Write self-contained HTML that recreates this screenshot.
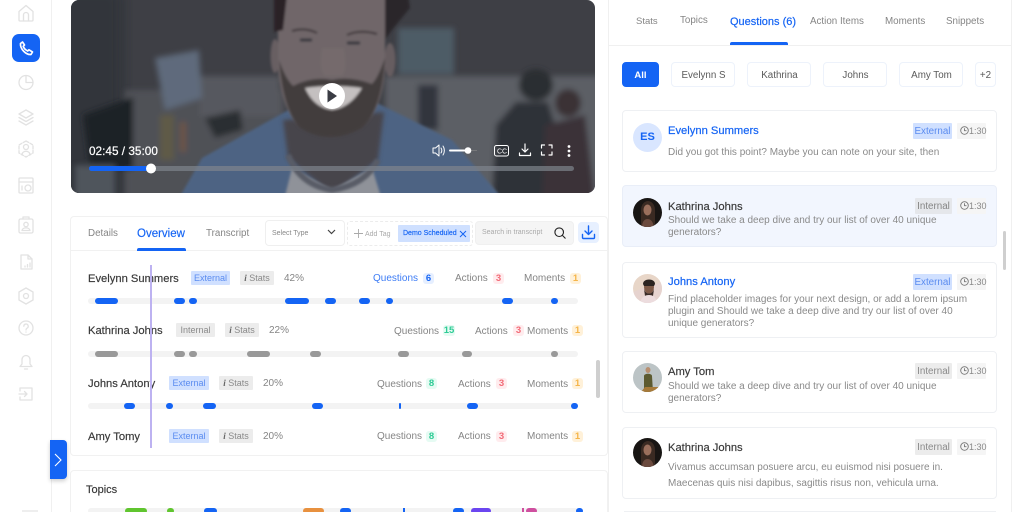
<!DOCTYPE html>
<html><head><meta charset="utf-8">
<style>
html,body{margin:0;padding:0;width:1024px;height:512px;overflow:hidden;background:#fff}
body{position:relative;font-family:"Liberation Sans",sans-serif;color:#888}
div,span.a{position:absolute;box-sizing:border-box}
.t{position:absolute;white-space:nowrap;line-height:14px;font-size:10px;color:#858585;transform:translateY(1px)}
.n{font-size:11.2px;color:#3a3a3a;-webkit-text-stroke:.18px #3a3a3a}
.b{position:absolute;height:14px;line-height:14px;border-radius:1px;font-size:9px;text-align:center;white-space:nowrap}
.ext{background:#d0e0ff;color:#5b8cf0}
.int{background:#ececec;color:#8a8a8a}
.st{background:#ececec;color:#8a8a8a}
.c{position:absolute;height:11px;line-height:11px;width:11px;border-radius:3px;font-size:9.5px;text-align:center;font-weight:bold}
.tr{position:absolute;left:88px;width:490px;height:6px;border-radius:3px;background:#f3f3f3}
.s{position:absolute;height:6px;border-radius:3px;top:0;background:#1464f4}
.g .s{background:#999}
.card{position:absolute;left:622px;width:375px;border:1px solid #eef0f3;border-radius:4px;background:#fff}
.chip{position:absolute;top:62px;height:25px;line-height:24px;padding:1px 0 0 1px;border:1px solid #edf2fb;border-radius:4px;text-align:center;font-size:9.8px;color:#5a5a5a;background:#fff}
.pill{position:absolute;left:957px;width:29px;height:16px;line-height:17px;background:#f5f5f5;border-radius:1px;font-size:9px;color:#888;padding-left:12px;box-sizing:border-box}
.badge{position:absolute;width:39px;height:16px;line-height:17px;font-size:9.8px;text-align:center;border-radius:1px}
.av{position:absolute;left:633px;width:29px;height:29px;border-radius:50%;overflow:hidden}
.body{position:absolute;left:668px;font-size:10px;line-height:12.2px;color:#8a8a8a;white-space:nowrap}
svg{position:absolute;overflow:visible}
.ic{fill:none;stroke:#e2e2e2;stroke-width:1.3;stroke-linejoin:round;stroke-linecap:round}
</style></head><body>

<!-- sidebar -->
<div style="left:51px;top:0;width:1px;height:512px;background:#f0f0f0"></div>
<svg class="ic" style="left:17px;top:4px" width="18" height="18" viewBox="0 0 18 18"><path d="M2 7.500 9 1.500l7 6V16a1 1 0 0 1-1 1H3a1 1 0 0 1-1-1z"/><path d="M6.500 17v-6a2.500 2.500 0 0 1 5 0v6"/></svg>
<div style="left:12px;top:34px;width:28px;height:28px;border-radius:7px;background:#1464f4"></div>
<svg style="left:19px;top:41px" width="15" height="15" viewBox="0 0 15 15" fill="none" stroke="#fff" stroke-width="1.700" stroke-linecap="round" stroke-linejoin="round"><path d="M1.500 2.500 3.500 1l2 3-1.300 1.300c.6 2 2.200 3.600 4.500 4.700L10 8.800l3.500 2.200-1.500 2.500c-5 .5-11-5.500-10.500-11z"/></svg>
<svg class="ic" style="left:18px;top:74px" width="16" height="16" viewBox="0 0 16 16"><circle cx="8" cy="8.500" r="7"/><path d="M8 1.500v7h7"/></svg>
<svg class="ic" style="left:18px;top:109px" width="16" height="17" viewBox="0 0 16 17"><path d="M8 1 15 5 8 9 1 5z"/><path d="M1 8.500 8 12.500l7-4"/><path d="M1 12 8 16l7-4"/></svg>
<svg class="ic" style="left:17px;top:140px" width="18" height="18" viewBox="0 0 18 18"><path d="M9 1l7 4v8l-7 4-7-4V5z" stroke-dasharray="3 1.500"/><circle cx="9" cy="7" r="2.500"/><path d="M5 15c0-5 8-5 8 0"/></svg>
<svg class="ic" style="left:18px;top:177px" width="16" height="17" viewBox="0 0 16 17"><rect x="1" y="1" width="14" height="15" rx="1"/><path d="M1 5h14"/><circle cx="10" cy="11" r="3"/><path d="M4 9v4"/></svg>
<svg class="ic" style="left:18px;top:216px" width="16" height="18" viewBox="0 0 16 18"><rect x="1" y="3" width="14" height="14" rx="1.500"/><path d="M5 3V1h6v2"/><circle cx="8" cy="8.500" r="2.200"/><path d="M4 14.500c.5-3.500 7.500-3.500 8 0z"/></svg>
<svg class="ic" style="left:20px;top:254px" width="13" height="16" viewBox="0 0 13 16"><path d="M1 1h7l4 4v10H1z"/><path d="M8 1v4h4"/><path d="M5 13v-1M7.500 13v-2.500M10 13V9"/></svg>
<svg class="ic" style="left:18px;top:287px" width="16" height="18" viewBox="0 0 16 18"><path d="M8 1l7 4v8l-7 4-7-4V5z"/><circle cx="8" cy="9" r="2.500"/></svg>
<svg class="ic" style="left:18px;top:320px" width="16" height="16" viewBox="0 0 16 16"><circle cx="8" cy="8" r="7"/><path d="M5.800 6.200a2.200 2.200 0 1 1 3.200 2C8.300 8.600 8 9 8 10M8 12v.1"/></svg>
<svg class="ic" style="left:19px;top:354px" width="14" height="16" viewBox="0 0 14 16"><path d="M7 1.500a4 4 0 0 1 4 4V10l2 2.500H1L3 10V5.500a4 4 0 0 1 4-4z"/><path d="M5.500 15h3"/></svg>
<svg class="ic" style="left:19px;top:387px" width="14" height="14" viewBox="0 0 14 14"><path d="M1 4V1h12v12H1v-3"/><path d="M0 7h8M5.500 4.500 8 7l-2.500 2.500"/></svg>
<div style="left:22px;top:510px;width:16px;height:2px;background:#eee"></div>

<!-- video -->
<svg style="left:71px;top:0" width="524" height="193" viewBox="71 0 524 193">
<defs>
<clipPath id="vc"><rect x="71" y="0" width="524" height="193" rx="8"/></clipPath>
<filter id="b8"><feGaussianBlur stdDeviation="8"/></filter>
<filter id="b3"><feGaussianBlur stdDeviation="3"/></filter>
<filter id="b2"><feGaussianBlur stdDeviation="2"/></filter>
<filter id="b1"><feGaussianBlur stdDeviation="1.200"/></filter>
</defs>
<g clip-path="url(#vc)">
<rect x="60" y="-5" width="550" height="205" fill="#3e3f45"/>
<rect x="50" y="-15" width="75" height="225" fill="#33353b" filter="url(#b8)"/>
<g filter="url(#b3)">
<rect x="385" y="76" width="230" height="125" fill="#5c5e65"/>
<rect x="125" y="90" width="160" height="110" fill="#4f5157"/>
<rect x="200" y="76" width="80" height="40" fill="#56585e"/>
<path d="M83 115 133 97v72H90z" fill="#1f2127"/>
<path d="M155 58 199 50 202 98 165 110z" fill="#5f6a7b"/>
<path d="M205 118 240 110 243 130 215 138z" fill="#2c2e33"/>
<rect x="160" y="115" width="14" height="45" fill="#5f5a46"/>
<rect x="180" y="122" width="6" height="30" fill="#6d5247"/>
<rect x="418" y="85" width="20" height="45" fill="#33363c"/>
<rect x="398" y="28" width="56" height="46" fill="#4e5c66"/>
<ellipse cx="536" cy="85" rx="17" ry="16" fill="#2c2d33"/>
<path d="M492 200 496 125 516 102h32l6 20 2 78z" fill="#2f3037"/>
<ellipse cx="568" cy="103" rx="13" ry="14" fill="#3a3036"/>
<path d="M542 200 545 125 585 115 595 200z" fill="#3b3037"/>
<rect x="75" y="165" width="40" height="35" fill="#50545c"/>
</g>
<path d="M178 200 202 158 292 108 377 103 452 140 504 200z" fill="#4d6483" filter="url(#b1)"/>
<path d="M283 120 288 158 332 195 378 160 384 112z" fill="#47454c" filter="url(#b2)"/>
<path d="M284 200 292 168 332 190 372 168 382 200z" fill="#8f9299" filter="url(#b1)"/>
<path d="M288 155 Q300 185 332 190 Q365 185 378 160" fill="none" stroke="#585c66" stroke-width="6" filter="url(#b1)"/>
<g filter="url(#b1)">
<ellipse cx="275" cy="56" rx="4.500" ry="17" fill="#685f62"/>
<ellipse cx="390" cy="60" rx="5.500" ry="17" fill="#665d60"/>
<path d="M278 -5 V70 Q282 110 300 128 Q330 145 362 128 Q382 110 385 70 V-5z" fill="#6f6669"/>
<path d="M279 60 Q283 110 300 128 Q330 146 362 128 Q382 110 385 58 Q378 78 372 84 Q350 76 332 80 Q312 76 293 86 Q285 78 279 60z" fill="#433d3e"/>
<path d="M305 88 Q332 84 362 88 Q350 108 332 110 Q314 108 305 88z" fill="#c4c0c0"/>
<path d="M274 -5 V32 L283 30 L287 -5z" fill="#2a2426"/>
<path d="M385 -5 L385 40 L392 30 L410 8 L408 -5z" fill="#2a282c"/>
<path d="M322 48 Q318 70 325 76 H342 Q348 70 344 48z" fill="#746a6c"/>
<path d="M292 31 Q305 27 317 33M347 35 Q360 29 377 34" fill="none" stroke="#3d3537" stroke-width="2"/>
<path d="M300 40h12M347 43h13" stroke="#36363e" stroke-width="3"/>
</g>
</g>
<circle cx="332" cy="96" r="13" fill="#fff"/>
<path d="M327.500 89.500v13l9.500-6.500z" fill="#3a3c44"/>
<rect x="89" y="166" width="485" height="5" rx="2.500" fill="#7f848d" opacity=".7"/>
<rect x="89" y="166" width="62" height="5" rx="2.500" fill="#1464f4"/>
<circle cx="151" cy="168.500" r="5" fill="#fff"/>
<text x="89" y="155" font-size="11.800" fill="#fff" font-family="Liberation Sans" stroke="#fff" stroke-width=".2">02:45 / 35:00</text>
<g fill="none" stroke="#fff" stroke-width="1" stroke-linejoin="round" stroke-linecap="round">
<path d="M433 148v5h2.500l3.500 3v-11l-3.500 3zM441 148c1 1.500 1 3.500 0 5M443 146c1.800 2.500 1.800 6.500 0 9"/>
<rect x="494.500" y="145.500" width="14" height="10.500" rx="2"/>
<path d="M525 144v8M522 149l3 3 3-3M519.500 153v2.500h11V153" stroke-width="1.200"/>
<path d="M541.500 148v-3h3M549 145h3v3M552 152v3h-3M544.500 155h-3v-3" stroke-width="1.200"/>
</g>
<rect x="449" y="149.500" width="19" height="2" rx="1" fill="#fff"/>
<rect x="468" y="150" width="9" height="1" fill="#8a8a8a" opacity=".6"/>
<circle cx="468" cy="150.500" r="3.300" fill="#fff"/>
<text x="497" y="153.500" font-size="7" fill="#fff" font-family="Liberation Sans">CC</text>
<circle cx="569" cy="146.500" r="1.400" fill="#fff"/><circle cx="569" cy="151" r="1.400" fill="#fff"/><circle cx="569" cy="155.500" r="1.400" fill="#fff"/>
</svg>

<!-- left card -->
<div style="left:70px;top:216px;width:538px;height:240px;background:#fff;border:1px solid #f1f1f1;border-radius:4px"></div>
<div style="left:71px;top:250px;width:536px;height:1px;background:#f1f1f1"></div>
<span class="t" style="left:88px;top:226px;font-size:9.800px">Details</span>
<span class="t" style="left:137px;top:226px;font-size:11.500px;color:#1464f4;-webkit-text-stroke:.15px #1464f4">Overview</span>
<div style="left:137px;top:248px;width:49px;height:3px;background:#1464f4;border-radius:2px 2px 0 0"></div>
<span class="t" style="left:206px;top:226px;font-size:9.800px">Transcript</span>
<div style="left:265px;top:220px;width:80px;height:26px;border:1px solid #efefef;border-radius:4px;background:#fff"></div>
<span class="t" style="left:272px;top:226px;font-size:7px;color:#888">Select Type</span>
<svg style="left:327px;top:229px" width="9" height="6" fill="none" stroke="#444" stroke-width="1.200"><path d="M1 1l3.500 3.500L8 1"/></svg>
<div style="left:347px;top:221px;width:126px;height:25px;border:1px dashed #ececec;border-radius:3px"></div>
<svg style="left:354px;top:229px" width="9" height="9" stroke="#aaa" stroke-width=".9"><path d="M4.500 0v9M0 4.500h9"/></svg>
<span class="t" style="left:365px;top:227px;font-size:7px;color:#aaa">Add Tag</span>
<div style="left:398px;top:225px;width:72px;height:17px;background:#cfe0ff;border-radius:1px"></div>
<span class="t" style="left:403px;top:226px;font-size:7px;color:#1464f4;-webkit-text-stroke:.15px #1464f4">Demo Scheduled</span>
<svg style="left:459px;top:230px" width="8" height="8" stroke="#1464f4" stroke-width="1"><path d="M1 1l6 6M7 1L1 7"/></svg>
<div style="left:475px;top:221px;width:99px;height:24px;background:#f5f5f5;border-radius:4px;border:1px solid #f0f0f0"></div>
<span class="t" style="left:482px;top:225px;font-size:7px;color:#aaa">Search in transcript</span>
<svg style="left:554px;top:227px" width="12" height="12" fill="none" stroke="#222" stroke-width="1.100"><circle cx="5.200" cy="5.200" r="4.300"/><path d="M8.400 8.400 11.500 11.500"/></svg>
<div style="left:578px;top:222px;width:21px;height:21px;background:#e7f0ff;border-radius:4px"></div>
<svg style="left:581px;top:225px" width="15" height="15" fill="none" stroke="#1464f4" stroke-width="1.400" stroke-linecap="round" stroke-linejoin="round"><path d="M7.500 1v8M4 6l3.500 3.500L11 6M1.500 9.500v3a1 1 0 0 0 1 1h10a1 1 0 0 0 1-1v-3"/></svg>

<!-- row 1 -->
<span class="t n" style="left:88px;top:271px">Evelynn Summers</span>
<span class="b ext" style="left:191px;top:271px;width:39px">External</span>
<span class="b st" style="left:240px;top:271px;width:34px"><i style="font-family:'Liberation Serif';font-weight:bold;color:#666">i</i> Stats</span>
<span class="t" style="left:284px;top:271px">42%</span>
<span class="t" style="left:373px;top:271px;color:#3d7cf5">Questions</span>
<span class="c" style="left:423px;top:273px;background:#e6efff;color:#1464f4">6</span>
<span class="t" style="left:455px;top:271px">Actions</span>
<span class="c" style="left:493px;top:273px;background:#ffecee;color:#f26a76">3</span>
<span class="t" style="left:524px;top:271px">Moments</span>
<span class="c" style="left:570px;top:273px;background:#fff1d9;color:#f5b54a">1</span>
<div class="tr" style="top:298px">
<span class="s" style="left:7px;width:23px"></span><span class="s" style="left:86px;width:11px"></span><span class="s" style="left:101px;width:8px"></span><span class="s" style="left:197px;width:24px"></span><span class="s" style="left:237px;width:11px"></span><span class="s" style="left:271px;width:11px"></span><span class="s" style="left:298px;width:7px"></span><span class="s" style="left:414px;width:11px"></span><span class="s" style="left:463px;width:7px"></span>
</div>
<!-- row 2 -->
<span class="t n" style="left:88px;top:323px">Kathrina Johns</span>
<span class="b int" style="left:176px;top:323px;width:39px">Internal</span>
<span class="b st" style="left:225px;top:323px;width:34px"><i style="font-family:'Liberation Serif';font-weight:bold;color:#666">i</i> Stats</span>
<span class="t" style="left:269px;top:323px">22%</span>
<span class="t" style="left:394px;top:324px">Questions</span>
<span class="c" style="left:443px;top:325px;width:12px;background:#e6fbf3;color:#2ecb95">15</span>
<span class="t" style="left:475px;top:324px">Actions</span>
<span class="c" style="left:513px;top:325px;background:#ffecee;color:#f26a76">3</span>
<span class="t" style="left:527px;top:324px">Moments</span>
<span class="c" style="left:572px;top:325px;background:#fff1d9;color:#f5b54a">1</span>
<div class="tr g" style="top:351px">
<span class="s" style="left:7px;width:23px"></span><span class="s" style="left:86px;width:11px"></span><span class="s" style="left:101px;width:8px"></span><span class="s" style="left:159px;width:23px"></span><span class="s" style="left:222px;width:11px"></span><span class="s" style="left:310px;width:11px"></span><span class="s" style="left:374px;width:10px"></span><span class="s" style="left:463px;width:7px"></span>
</div>
<!-- row 3 -->
<span class="t n" style="left:88px;top:376px">Johns Antony</span>
<span class="b ext" style="left:169px;top:376px;width:40px">External</span>
<span class="b st" style="left:219px;top:376px;width:34px"><i style="font-family:'Liberation Serif';font-weight:bold;color:#666">i</i> Stats</span>
<span class="t" style="left:263px;top:376px">20%</span>
<span class="t" style="left:377px;top:377px">Questions</span>
<span class="c" style="left:426px;top:378px;background:#e6fbf3;color:#2ecb95">8</span>
<span class="t" style="left:458px;top:377px">Actions</span>
<span class="c" style="left:496px;top:378px;background:#ffecee;color:#f26a76">3</span>
<span class="t" style="left:527px;top:377px">Moments</span>
<span class="c" style="left:572px;top:378px;background:#fff1d9;color:#f5b54a">1</span>
<div class="tr" style="top:403px">
<span class="s" style="left:36px;width:11px"></span><span class="s" style="left:78px;width:7px"></span><span class="s" style="left:115px;width:13px"></span><span class="s" style="left:224px;width:11px"></span><span class="s" style="left:311px;width:2px"></span><span class="s" style="left:379px;width:11px"></span><span class="s" style="left:483px;width:7px"></span>
</div>
<!-- row 4 -->
<span class="t n" style="left:88px;top:429px">Amy Tomy</span>
<span class="b ext" style="left:169px;top:429px;width:40px">External</span>
<span class="b st" style="left:219px;top:429px;width:34px"><i style="font-family:'Liberation Serif';font-weight:bold;color:#666">i</i> Stats</span>
<span class="t" style="left:263px;top:429px">20%</span>
<span class="t" style="left:377px;top:429px">Questions</span>
<span class="c" style="left:426px;top:431px;background:#e6fbf3;color:#2ecb95">8</span>
<span class="t" style="left:458px;top:429px">Actions</span>
<span class="c" style="left:496px;top:431px;background:#ffecee;color:#f26a76">3</span>
<span class="t" style="left:527px;top:429px">Moments</span>
<span class="c" style="left:572px;top:431px;background:#fff1d9;color:#f5b54a">1</span>

<div style="left:150px;top:265px;width:2px;height:183px;background:#bdb2f1"></div>
<div style="left:596px;top:360px;width:4px;height:38px;background:#cfcfcf;border-radius:2px"></div>

<!-- topics -->
<div style="left:70px;top:470px;width:538px;height:50px;background:#fff;border:1px solid #f1f1f1;border-radius:4px"></div>
<span class="t n" style="left:86px;top:482px;font-size:11px">Topics</span>
<div style="left:88px;top:508px;width:490px;height:6px;background:#f3f3f3;border-radius:3px"></div>
<div style="left:125px;top:508px;width:22px;height:6px;background:#60c52f;border-radius:3px"></div>
<div style="left:167px;top:508px;width:7px;height:6px;background:#60c52f;border-radius:3px"></div>
<div style="left:204px;top:508px;width:13px;height:6px;background:#1464f4;border-radius:3px"></div>
<div style="left:303px;top:508px;width:21px;height:6px;background:#e8913f;border-radius:3px"></div>
<div style="left:340px;top:508px;width:11px;height:6px;background:#1464f4;border-radius:3px"></div>
<div style="left:403px;top:508px;width:2px;height:6px;background:#1464f4"></div>
<div style="left:453px;top:508px;width:11px;height:6px;background:#1464f4;border-radius:3px"></div>
<div style="left:471px;top:508px;width:20px;height:6px;background:#6b46f0;border-radius:3px"></div>
<div style="left:522px;top:508px;width:2px;height:6px;background:#cf4f9f"></div>
<div style="left:526px;top:508px;width:11px;height:6px;background:#cf4f9f;border-radius:3px"></div>
<div style="left:576px;top:508px;width:7px;height:6px;background:#1464f4;border-radius:3px"></div>

<!-- chevron -->
<div style="left:50px;top:440px;width:17px;height:39px;background:#1464f4;border-radius:0 4px 4px 0;box-shadow:0 2px 4px rgba(0,0,0,.2)"></div>
<svg style="left:54px;top:453px" width="8" height="14" fill="none" stroke="#fff" stroke-width="1.100"><path d="M1 1l6 6-6 6"/></svg>

<!-- right panel -->
<div style="left:608px;top:0;width:1px;height:512px;background:#f0f0f0"></div>
<div style="left:1011px;top:0;width:1px;height:512px;background:#f0f0f0"></div>
<div style="left:608px;top:45px;width:403px;height:1px;background:#f0f0f0"></div>
<span class="t" style="left:636px;top:14px;font-size:9.500px">Stats</span>
<span class="t" style="left:680px;top:13px;font-size:9.800px">Topics</span>
<span class="t" style="left:730px;top:14px;font-size:11px;color:#1464f4;-webkit-text-stroke:.2px #1464f4">Questions (6)</span>
<span class="t" style="left:810px;top:14px;font-size:9.800px">Action Items</span>
<span class="t" style="left:885px;top:14px;font-size:9.800px">Moments</span>
<span class="t" style="left:946px;top:14px;font-size:9.800px">Snippets</span>
<div style="left:730px;top:42px;width:58px;height:3px;background:#1464f4;border-radius:2px 2px 0 0"></div>

<div class="chip" style="left:622px;width:37px;padding-left:0;background:#1464f4;border-color:#1464f4;color:#fff;font-weight:bold;font-size:9.500px">All</div>
<div class="chip" style="left:671px;width:64px">Evelynn S</div>
<div class="chip" style="left:747px;width:64px">Kathrina</div>
<div class="chip" style="left:823px;width:64px">Johns</div>
<div class="chip" style="left:899px;width:64px">Amy Tom</div>
<div class="chip" style="left:975px;width:21px;padding-left:0">+2</div>
<div style="left:1003px;top:231px;width:3px;height:39px;background:#cfcfcf;border-radius:2px"></div>

<!-- cards -->
<div class="card" style="top:110px;height:62px"></div>
<div class="av" style="top:123px;background:#d9e6ff;color:#1464f4;font-weight:bold;font-size:11px;line-height:29px;text-align:center">ES</div>
<span class="t n" style="left:668px;top:123px;color:#1464f4;-webkit-text-stroke:.2px #1464f4">Evelynn Summers</span>
<div class="badge ext" style="left:913px;top:123px">External</div>
<div class="pill" style="top:123px">1:30</div>
<div class="body" style="top:147px">Did you got this point? Maybe you can note on your site, then</div>

<div class="card" style="top:185px;height:62px;background:#f2f6fe;border-color:#e9eef8"></div>
<div class="av" style="top:198px;background:#181513"><svg width="29" height="29"><path d="M8 29V12c0-6 4-9 7-9s7 3 7 9v17z" fill="#3a2a22"/><ellipse cx="14.500" cy="12" rx="4" ry="5.500" fill="#9a6f5c"/><path d="M9 29c0-6 3-8 5.500-8s6 2 6 8z" fill="#6b4a3e"/></svg></div>
<span class="t n" style="left:668px;top:199px">Kathrina Johns</span>
<div class="badge" style="left:915px;top:198px;width:37px;background:#e5e7eb;color:#858585">Internal</div>
<div class="pill" style="top:198px">1:30</div>
<div class="body" style="top:215px">Should we take a deep dive and try our list of over 40 unique<br>generators?</div>

<div class="card" style="top:262px;height:76px"></div>
<div class="av" style="top:274px;background:#e8d6c8"><svg width="29" height="29"><path d="M0 29V18l10-4 19-6v21z" fill="#e6d3cf"/><ellipse cx="16" cy="13" rx="5" ry="6.500" fill="#7e5a48"/><path d="M10 10c0-6 12-6 12 0l-1 2-10 0z" fill="#2b2320"/><path d="M11 15c2 6 8 6 10 0l-1 7h-8z" fill="#3a2c28"/><path d="M7 29c1-6 5-8 9-8s7 2 8 8z" fill="#ecdcde"/></svg></div>
<span class="t n" style="left:668px;top:274px;color:#1464f4;-webkit-text-stroke:.2px #1464f4">Johns Antony</span>
<div class="badge ext" style="left:913px;top:274px">External</div>
<div class="pill" style="top:274px">1:30</div>
<div class="body" style="top:294px">Find placeholder images for your next design, or add a lorem ipsum<br>plugin and Should we take a deep dive and try our list of over 40<br>unique generators?</div>

<div class="card" style="top:351px;height:62px"></div>
<div class="av" style="top:363px;background:#bcc4c6"><svg width="29" height="29"><ellipse cx="15" cy="7" rx="2.500" ry="3" fill="#b88f70"/><path d="M11 29V13c0-3 8-3 8 0l1 16z" fill="#5c5a30"/><path d="M12 24h14v5H8z" fill="#a67a3a"/></svg></div>
<span class="t n" style="left:668px;top:364px">Amy Tom</span>
<div class="badge int" style="left:915px;top:363px;width:37px">Internal</div>
<div class="pill" style="top:363px">1:30</div>
<div class="body" style="top:381px">Should we take a deep dive and try our list of over 40 unique<br>generators?</div>

<div class="card" style="top:427px;height:72px"></div>
<div class="av" style="top:438px;background:#181513"><svg width="29" height="29"><path d="M8 29V12c0-6 4-9 7-9s7 3 7 9v17z" fill="#3a2a22"/><ellipse cx="14.500" cy="12" rx="4" ry="5.500" fill="#9a6f5c"/><path d="M9 29c0-6 3-8 5.500-8s6 2 6 8z" fill="#6b4a3e"/></svg></div>
<span class="t n" style="left:668px;top:440px">Kathrina Johns</span>
<div class="badge int" style="left:915px;top:439px;width:37px">Internal</div>
<div class="pill" style="top:439px">1:30</div>
<div class="body" style="top:460px;line-height:15.500px">Vivamus accumsan posuere arcu, eu euismod nisi posuere in.<br>Maecenas quis nisi dapibus, sagittis risus non, vehicula urna.</div>
<div style="left:624px;top:511px;width:372px;height:1px;background:#eef0f3"></div>

<!-- clock icons -->
<svg style="left:960px;top:126px" width="9" height="9" fill="none" stroke="#777" stroke-width=".9"><circle cx="4.500" cy="4.500" r="3.800"/><path d="M4.500 2.200v2.500h2"/></svg>
<svg style="left:960px;top:201px" width="9" height="9" fill="none" stroke="#777" stroke-width=".9"><circle cx="4.500" cy="4.500" r="3.800"/><path d="M4.500 2.200v2.500h2"/></svg>
<svg style="left:960px;top:277px" width="9" height="9" fill="none" stroke="#777" stroke-width=".9"><circle cx="4.500" cy="4.500" r="3.800"/><path d="M4.500 2.200v2.500h2"/></svg>
<svg style="left:960px;top:366px" width="9" height="9" fill="none" stroke="#777" stroke-width=".9"><circle cx="4.500" cy="4.500" r="3.800"/><path d="M4.500 2.200v2.500h2"/></svg>
<svg style="left:960px;top:442px" width="9" height="9" fill="none" stroke="#777" stroke-width=".9"><circle cx="4.500" cy="4.500" r="3.800"/><path d="M4.500 2.200v2.500h2"/></svg>
</body></html>
